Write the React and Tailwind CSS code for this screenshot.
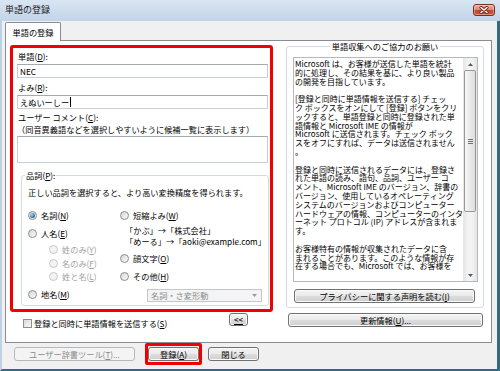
const FONT = "font-['Noto_Sans_CJK_JP','Noto_Sans_CJK_SC',sans-serif]"

const infoLines = [
  'Microsoft は、お客様が送信した単語を統計',
  '的に処理し、その結果を基に、より良い製品',
  'の開発を目指しています。',
  '',
  '[登録と同時に単語情報を送信する] チェッ',
  'ク ボックスをオンにして [登録] ボタンをクリ',
  'ックすると、単語登録と同時に登録された単',
  '語情報と Microsoft IME の情報が',
  'Microsoft に送信されます。チェック ボック',
  'スをオフにすれば、データは送信されません',
  '。',
  '',
  '登録と同時に送信されるデータには、登録さ',
  'れた単語の読み、語句、品詞、ユーザー コ',
  'メント、Microsoft IME のバージョン、辞書の',
  'バージョン、使用しているオペレーティング',
  'システムのバージョンおよびコンピューター',
  'ハードウェアの情報、コンピューターのインタ',
  'ーネット プロトコル (IP) アドレスが含まれま',
  'す。',
  '',
  'お客様特有の情報が収集されたデータに含',
  'まれることがあります。このような情報が存',
  '在する場合でも、Microsoft では、お客様を',
]

function U({ children }) {
  return <span className="underline underline-offset-[1px]">{children}</span>
}

function Btn({ disabled, className = '', children }) {
  return (
    <div
      className={`flex items-center justify-center rounded-[3px] border text-[8.2px] leading-none whitespace-nowrap ${
        disabled
          ? 'border-[#b5b9bc] bg-[#f4f4f4] text-[#8a8a8a]'
          : 'border-[#707070] bg-[linear-gradient(#f3f3f3_0%,#ebebeb_48%,#dddddd_52%,#cfcfcf_100%)] text-black shadow-[inset_0_0_0_1px_#fbfbfb]'
      } ${className}`}
    >
      {children}
    </div>
  )
}

function Label({ className = '', children }) {
  return <div className={`h-[11px] whitespace-nowrap text-[8.2px] leading-[11px] ${className}`}>{children}</div>
}

function Field({ value, caret }) {
  return (
    <div className="flex h-[14px] w-[251px] items-center border border-[#c9cdd4] border-t-[#a4a8af] bg-white pl-[2px] text-[8.2px] leading-none">
      {value}
      {caret && <span className="ml-[1px] h-[10px] w-px bg-black" />}
    </div>
  )
}

function Radio({ checked, disabled }) {
  return (
    <span
      className={`flex h-[9px] w-[9px] shrink-0 items-center justify-center rounded-full border ${
        disabled ? 'border-[#c8c8c8] bg-[#f3f3f3]' : 'border-[#8a8c8e] bg-[linear-gradient(135deg,#d6d6d6,#fbfbfb)]'
      }`}
    >
      {checked && <span className="h-[5px] w-[5px] rounded-full bg-[radial-gradient(circle_at_35%_35%,#a9dcf8,#2464a0_70%)]" />}
    </span>
  )
}

function Option({ checked, disabled, className = '', children }) {
  return (
    <div
      className={`flex h-[11px] items-center gap-[4px] whitespace-nowrap text-[8.2px] leading-none ${
        disabled ? 'text-[#a2a2a2]' : 'text-black'
      } ${className}`}
    >
      <Radio checked={checked} disabled={disabled} />
      <span>{children}</span>
    </div>
  )
}

function Scrollbar() {
  return (
    <div className="flex w-[14px] shrink-0 flex-col bg-[linear-gradient(90deg,#e4e4e4,#f3f3f3_35%,#f3f3f3_65%,#e4e4e4)]">
      <div className="flex h-[12px] items-center justify-center">
        <svg width="5" height="3" viewBox="0 0 5 3">
          <path d="M0 3 L2.5 0 L5 3 Z" fill="#4f5b6a" />
        </svg>
      </div>
      <div className="mx-[1px] flex h-[142px] items-center justify-center rounded-[2px] border border-[#979797] bg-[linear-gradient(90deg,#f7f7f7,#dedede)]">
        <div className="flex flex-col gap-[1px]">
          <span className="h-px w-[5px] bg-[#707070]" />
          <span className="h-px w-[5px] bg-[#707070]" />
          <span className="h-px w-[5px] bg-[#707070]" />
        </div>
      </div>
      <div className="flex-1" />
      <div className="flex h-[12px] items-center justify-center">
        <svg width="5" height="3" viewBox="0 0 5 3">
          <path d="M0 0 L2.5 3 L5 0 Z" fill="#4f5b6a" />
        </svg>
      </div>
    </div>
  )
}

function CloseButton() {
  return (
    <div className="mt-[4px] flex h-[12px] w-[22px] items-center justify-center rounded-[3px] border border-[#76301f] bg-[linear-gradient(#eab0a2_0%,#dc8a76_45%,#c6462d_55%,#cf5a3e_100%)] shadow-[inset_0_0_0_1px_rgba(255,255,255,0.35)]">
      <svg width="10" height="8" viewBox="0 0 10 8">
        <path d="M2 1.5 L8 6.5 M8 1.5 L2 6.5" stroke="#5a1a10" strokeWidth="3" strokeLinecap="round" />
        <path d="M2 1.5 L8 6.5 M8 1.5 L2 6.5" stroke="#ffffff" strokeWidth="1.6" strokeLinecap="round" />
      </svg>
    </div>
  )
}

function WordForm() {
  return (
    <div className="flex h-[267px] flex-col rounded-[3px] border-[3px] border-[#f00000] pl-[4px]">
      <Label className="ml-[1px] mt-[3px]">
        単語(<U>D</U>):
      </Label>
      <div className="mt-[2px]">
        <Field value="NEC" />
      </div>
      <Label className="ml-[1px] mt-[4px]">
        よみ(<U>R</U>):
      </Label>
      <div className="mt-[2px]">
        <Field value="えぬいーしー" caret />
      </div>
      <Label className="ml-[1px] mt-[3px]">
        ユーザー コメント(<U>C</U>):
      </Label>
      <Label className="mt-[1px]">（同音異義語などを選択しやすいように候補一覧に表示します）</Label>
      <div className="mt-[1px] h-[27px] w-[251px] border border-[#c9cdd4] border-t-[#a4a8af] bg-white" />

      <fieldset className="ml-[4px] mt-[7px] h-[136px] w-[248px] rounded-[3px] border border-[#d3dce3]">
        <legend className="ml-[3px] h-[11px] px-[1px] text-[8.2px] leading-[11px]">
          品詞(<U>P</U>):
        </legend>
        <div className="pl-[6px]">
          <Label className="mt-[6px]">正しい品詞を選択すると、より高い変換精度を得られます。</Label>
          <div className="flex">
            <div className="flex w-[92px] flex-col">
              <Option checked className="mt-[12px]">
                名詞(<U>N</U>)
              </Option>
              <Option className="mt-[7px]">
                人名(<U>E</U>)
              </Option>
              <Option disabled className="ml-[21px] mt-[5px]">
                姓のみ(<U>Y</U>)
              </Option>
              <Option disabled className="ml-[21px] mt-[3px]">
                名のみ(<U>F</U>)
              </Option>
              <Option disabled className="ml-[21px] mt-[2px]">
                姓と名(<U>L</U>)
              </Option>
              <Option className="mt-[7px]">
                地名(<U>M</U>)
              </Option>
            </div>
            <div className="flex flex-col">
              <Option className="mt-[12px]">
                短縮よみ(<U>W</U>)
              </Option>
              <Label className="ml-[5px] mt-[4px]">「かぶ」→「株式会社」</Label>
              <Label className="ml-[5px]">「めーる」→「aoki@example.com」</Label>
              <Option className="mt-[6px]">
                顔文字(<U>O</U>)
              </Option>
              <Option className="mt-[7px]">
                その他(<U>H</U>)
              </Option>
              <div className="ml-[27px] mt-[7px] flex h-[13px] w-[115px] items-center justify-between border border-[#c3c7cb] bg-[#f4f4f4] pl-[3px] pr-[4px] text-[8.2px] leading-none text-[#8c8c8c]">
                <span>名詞・さ変形動</span>
                <svg width="5" height="3" viewBox="0 0 5 3">
                  <path d="M0 0 L2.5 3 L5 0 Z" fill="#9a9a9a" />
                </svg>
              </div>
            </div>
          </div>
        </div>
      </fieldset>
    </div>
  )
}

function InfoPanel() {
  return (
    <div className="flex w-[198px] flex-col">
      <fieldset className="h-[267px] rounded-[3px] border border-[#d3dce3]">
        <legend className="mx-auto h-[11px] px-[2px] text-[8.2px] leading-[11px]">単語収集へのご協力のお願い</legend>
        <div className="ml-[6px] mt-[5px] flex h-[225px] w-[185px] border border-[#b6bac0] bg-white">
          <div className="flex-1 overflow-hidden pl-[1px] pt-[2px] text-[8px] leading-[8.8px] text-black">
            {infoLines.map((line, i) => (
              <div key={i} className="h-[8.8px] whitespace-pre">
                {line || '\u00a0'}
              </div>
            ))}
          </div>
          <Scrollbar />
        </div>
        <Btn className="ml-[7px] mt-[7px] h-[14px] w-[181px]">
          プライバシーに関する声明を読む(<U>I</U>)
        </Btn>
      </fieldset>
      <Btn className="ml-[2px] mt-[5px] h-[14px] w-[195px]">
        更新情報(<U>U</U>)...
      </Btn>
    </div>
  )
}

export default function App() {
  return (
    <div className={`flex h-[371px] w-[500px] flex-col overflow-hidden bg-[#c6d7ea] ${FONT}`}>
      <div className="flex h-[21px] shrink-0 items-start justify-between bg-[linear-gradient(#d9e5f2,#c2d4e8)] pl-[5px] pr-[5px]">
        <span className="mt-[4px] text-[9px] leading-[12px] text-[#1c1c1c]">単語の登録</span>
        <CloseButton />
      </div>

      <div className="flex h-[350px] flex-col border-b-2 border-l-2 border-r-[3px] border-b-[#386a7f] border-l-[#bfd1e5] border-r-[#386a7f] bg-[#f0f0f0]">
        <div className="flex h-[19px] items-end pl-[3px]">
          <div className="relative z-10 -mb-px flex h-[19px] w-[56px] items-center justify-center rounded-t-[2px] border border-b-0 border-[#898c95] bg-white text-[8.2px] leading-none">
            単語の登録
          </div>
        </div>

        <div className="ml-[3px] flex h-[303px] w-[487px] border border-[#898c95] bg-white pl-[4px]">
          <div className="mt-[4px] flex w-[263px] flex-col">
            <WordForm />
            <div className="mt-[1px] flex items-start">
              <div className="ml-[13px] mt-[5px] flex h-[11px] flex-1 items-center gap-[2px] whitespace-nowrap text-[8.2px] leading-none">
                <span className="h-[9px] w-[9px] shrink-0 border border-[#8e8f8f] bg-[linear-gradient(135deg,#dcdcdc,#f8f8f8)]" />
                <span>
                  登録と同時に単語情報を送信する(<U>S</U>)
                </span>
              </div>
              <Btn className="mr-[25px] h-[13px] w-[19px]">
                <U>{'<<'}</U>
              </Btn>
            </div>
          </div>
          <div className="ml-[13px]">
            <InfoPanel />
          </div>
        </div>

        <div className="flex h-[22px] items-center pl-[12px]">
          <Btn disabled className="h-[14px] w-[121px]">
            ユーザー辞書ツール(<U>T</U>)...
          </Btn>
          <div className="ml-[10px] rounded-[2px] border-[3px] border-[#f00000] py-[1px]">
            <Btn className="h-[14px] w-[51px]">
              登録(<U>A</U>)
            </Btn>
          </div>
          <Btn className="ml-[6px] h-[14px] w-[51px]">閉じる</Btn>
        </div>
      </div>
    </div>
  )
}
